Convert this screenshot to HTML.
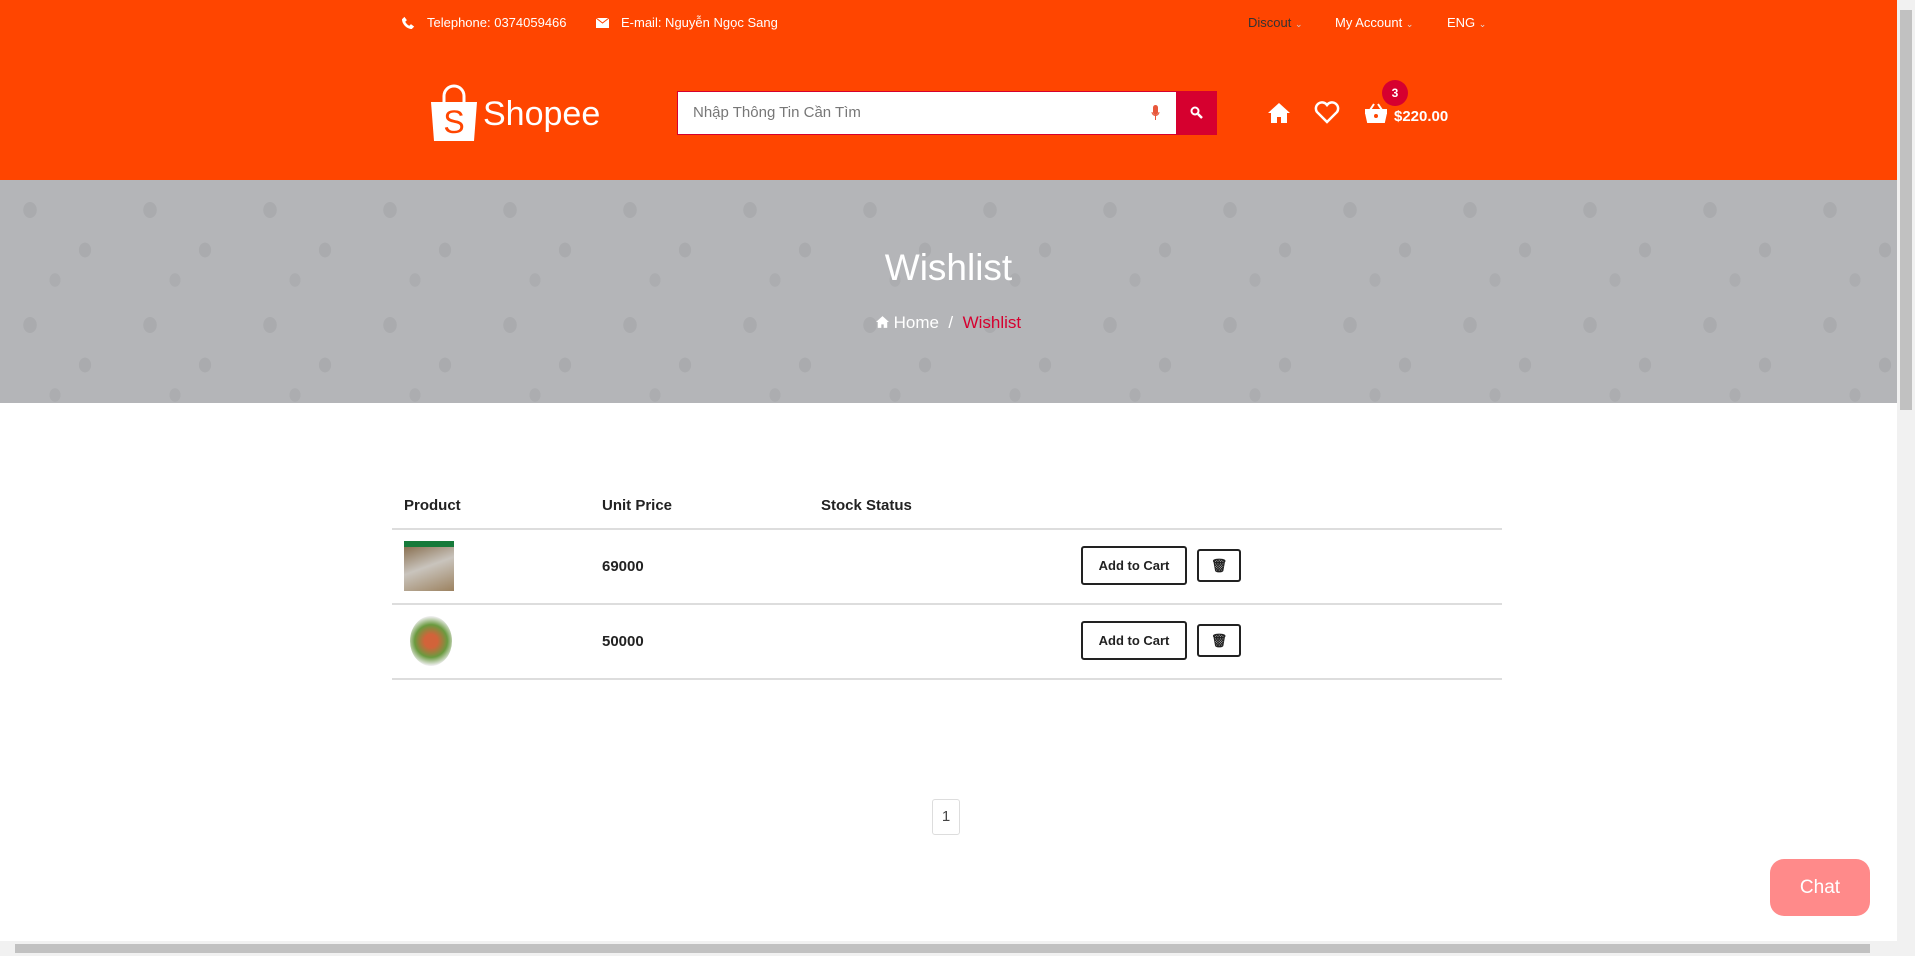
<!DOCTYPE html>
<html><head><meta charset="utf-8"><style>
*{margin:0;padding:0;box-sizing:border-box}
body{width:1915px;height:956px;overflow:hidden;font-family:"Liberation Sans","Noto Sans CJK SC",sans-serif;background:#fff;position:relative;color:#222}
.hdr{position:absolute;left:0;top:0;width:1897px;height:180px;background:#ff4500;color:#fff}
.t{position:absolute;font-size:13px;top:15px}
.ban{position:absolute;left:0;top:180px;width:1897px;height:223px;background-color:#b4b5b8;
background-image:radial-gradient(ellipse 11px 13px at 30px 30px,#aaabae 60%,transparent 63%),radial-gradient(ellipse 10px 12px at 85px 70px,#aaabae 60%,transparent 63%),radial-gradient(ellipse 9px 11px at 55px 100px,#acadb0 60%,transparent 63%);background-size:120px 115px}
.abs{position:absolute}
.line{position:absolute;left:392px;width:1110px;height:2px;background:#ddd}
.h{position:absolute;top:497px;font-size:15px;font-weight:bold}
.btn{position:absolute;border:2px solid #222;border-radius:3px;background:#fff;font-weight:bold;font-size:13px;display:flex;align-items:center;justify-content:center}
</style></head><body>
<div class="hdr">
 <svg class="abs" style="left:402px;top:16px" width="13" height="13" viewBox="0 0 16 16"><path fill="#fff" d="M12 16c-6 0-12-6-12-12L3 1l3 4-2 2c1 2 3 4 5 5l2-2 4 3z"/></svg>
 <div class="t" style="left:427px">Telephone: 0374059466</div>
 <svg class="abs" style="left:596px;top:18px" width="13" height="10" viewBox="0 0 13 10"><rect width="13" height="10" fill="#fff"/><path d="M0 0l6.5 5L13 0" stroke="#ff4500" fill="none"/></svg>
 <div class="t" style="left:621px">E-mail: Nguyễn Ngọc Sang</div>
 <div class="t" style="left:1248px;color:#333">Discout <span style="font-size:9px;color:#ccc">⌄</span></div>
 <div class="t" style="left:1335px">My Account <span style="font-size:9px;color:#ddd">⌄</span></div>
 <div class="t" style="left:1447px">ENG <span style="font-size:9px;color:#ddd">⌄</span></div>
 <svg class="abs" style="left:430px;top:84px" width="48" height="59" viewBox="0 0 48 59"><path d="M14 18V12a10 10 0 0 1 20 0v6" stroke="#fff" stroke-width="3" fill="none"/><path d="M1 18h46l-3 39H4z" fill="#fff"/><text x="24" y="49" text-anchor="middle" font-size="32" fill="#ff4500" font-family="Liberation Sans">S</text></svg>
 <div class="abs" style="left:483px;top:95px;font-size:34px;color:#fff">Shopee</div>
 <div class="abs" style="left:677px;top:91px;width:500px;height:44px;background:#fff;border:1px solid #d6002f"><span style="position:absolute;left:15px;top:12px;font-size:15px;color:#777">Nhập Thông Tin Cần Tìm</span><svg style="position:absolute;right:16px;top:13px" width="9" height="16" viewBox="0 0 9 16"><rect x="2" width="5" height="10" rx="2.5" fill="#e8573b"/><path d="M1 7a3.5 3.5 0 0 0 7 0M4.5 11v4" stroke="#e8573b" fill="none"/></svg></div>
 <div class="abs" style="left:1176px;top:91px;width:41px;height:44px;background:#d6002f"><svg style="position:absolute;left:14px;top:15px" width="13" height="13" viewBox="0 0 13 13"><circle cx="5" cy="5" r="3.5" stroke="#fff" stroke-width="2" fill="none"/><path d="M8 8l4 4" stroke="#fff" stroke-width="2.5"/></svg></div>
 <svg class="abs" style="left:1268px;top:103px" width="22" height="20" viewBox="0 0 22 20"><path d="M11 0L0 10h3v10h6v-6h4v6h6V10h3z" fill="#fff"/></svg>
 <svg class="abs" style="left:1314px;top:101px" width="26" height="23" viewBox="0 0 26 23"><path d="M13 21L3 11A6 6 0 0 1 13 4a6 6 0 0 1 10 7z" stroke="#fff" stroke-width="2.5" fill="none"/></svg>
 <svg class="abs" style="left:1365px;top:103px" width="22" height="20" viewBox="0 0 22 20"><path d="M0 7h22v3h-1l-2 9H3L1 10H0z M5 7l4-6M17 7l-4-6" fill="#fff" stroke="#fff" stroke-width="2"/><circle cx="11" cy="13" r="2" fill="#ff4500"/></svg>
 <div class="abs" style="left:1382px;top:80px;width:26px;height:26px;border-radius:50%;background:#d6002f;font-size:12px;font-weight:bold;text-align:center;line-height:26px">3</div>
 <div class="abs" style="left:1394px;top:108px;font-size:15px;font-weight:bold">$220.00</div>
</div>
<div class="ban">
 <div class="abs" style="left:0;width:1897px;top:67px;text-align:center;color:#fff;font-size:37px">Wishlist</div>
 <div class="abs" style="left:0;width:1897px;top:133px;text-align:center;color:#fff;font-size:17px"><svg width="13" height="12" viewBox="0 0 22 20" style="vertical-align:0"><path d="M11 0L0 10h3v10h6v-6h4v6h6V10h3z" fill="#fff"/></svg> Home &nbsp;/&nbsp; <span style="color:#d6002f">Wishlist</span></div>
</div>
<div class="h" style="left:404px">Product</div>
<div class="h" style="left:602px">Unit Price</div>
<div class="h" style="left:821px">Stock Status</div>
<div class="line" style="top:528px"></div>
<div class="line" style="top:603px"></div>
<div class="line" style="top:678px"></div>
<div class="abs" style="left:404px;top:541px;width:50px;height:50px;background:linear-gradient(160deg,#8a7152,#c9c4bd 45%,#9c8260);border-top:6px solid #167a3a"></div>
<div class="abs" style="left:410px;top:616px;width:42px;height:50px;border-radius:50%;background:radial-gradient(circle,#d2633a 20%,#6a9a3f 50%,#eee 75%)"></div>
<div class="abs" style="left:602px;top:558px;font-size:15px;font-weight:bold">69000</div>
<div class="abs" style="left:602px;top:633px;font-size:15px;font-weight:bold">50000</div>
<div class="btn" style="left:1081px;top:546px;width:106px;height:39px">Add to Cart</div>
<div class="btn" style="left:1197px;top:549px;width:44px;height:33px">🗑</div>
<div class="btn" style="left:1081px;top:621px;width:106px;height:39px">Add to Cart</div>
<div class="btn" style="left:1197px;top:624px;width:44px;height:33px">🗑</div>
<div class="abs" style="left:932px;top:799px;width:28px;height:36px;border:1px solid #ddd;border-radius:3px;text-align:center;line-height:34px;font-size:15px;color:#444">1</div>
<div class="abs" style="left:1770px;top:859px;width:100px;height:57px;border-radius:14px;background:#ff8a8a;color:#fff;font-size:19px;text-align:center;line-height:57px">Chat</div>
<div class="abs" style="left:1897px;top:0;width:18px;height:941px;background:#f1f1f1"><div style="margin:10px 3px;height:400px;background:#c1c1c1"></div></div>
<div class="abs" style="left:0;top:941px;width:1915px;height:15px;background:#f1f1f1"><div style="margin:3px 15px;height:9px;width:1855px;background:#c1c1c1"></div></div>
</body></html>
